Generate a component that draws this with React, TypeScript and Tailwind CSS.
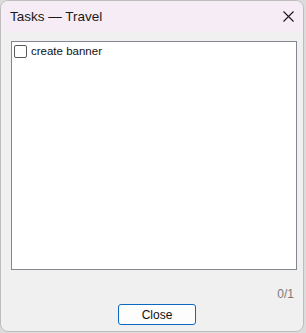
import React from "react";

export default function App() {
  return (
    <div className="w-[306px] h-[333px] bg-[#dcdcdc] overflow-hidden" style={{ fontFamily: '"Liberation Sans", Arial, sans-serif' }}>
      <div className="w-[304px] h-[332px] rounded-[8px] border border-[#bdbdbd] bg-[#f0f0f0] overflow-hidden flex flex-col">
        <div className="h-[31px] bg-[#f6ecf6] flex items-center justify-between pl-[9px] pr-[8px] shrink-0">
          <span className="text-[13.5px] text-[#1a1a1a] pt-[1px]">Tasks — Travel</span>
          <svg width="11" height="11" viewBox="0 0 11 11" className="mr-[1px] mb-[1px]">
            <path d="M0.5 0.5 L10.5 10.5 M10.5 0.5 L0.5 10.5" stroke="#1a1a1a" strokeWidth="1.1" />
          </svg>
        </div>
        <div className="flex-1 flex flex-col pl-[10px] pr-[6px] pt-[9px]">
          <div className="h-[229px] border border-[#838790] bg-white pt-[2px] pl-[2px]">
            <label className="flex items-center gap-[4px]">
              <span className="w-[13px] h-[13px] rounded-[2px] border border-[#5a5a5a] bg-white" />
              <span className="text-[11.5px] text-[#111] leading-[14px]">create banner</span>
            </label>
          </div>
          <div className="flex justify-end pr-[3px] mt-[17px]">
            <span className="text-[12px] text-[#7a7a7a] leading-[14px]">0/1</span>
          </div>
          <div className="flex mt-[3px] pl-[107px]">
            <button className="w-[78px] h-[21px] rounded-[3px] border border-[#0a67c2] bg-[#fdfdfd] text-[12px] text-[#111] leading-[14px]">
              Close
            </button>
          </div>
        </div>
      </div>
    </div>
  );
}
